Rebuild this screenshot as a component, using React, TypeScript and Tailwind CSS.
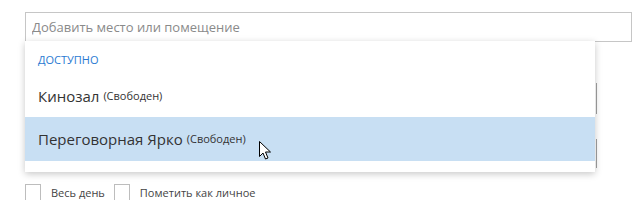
import { useState } from "react";

const font = { fontFamily: '"Open Sans", "Noto Sans", sans-serif' };

function Cursor() {
  return (
    <svg width="13" height="19" viewBox="0 0 13 19" className="absolute left-[259px] top-[141px]">
      <path
        d="M0.5 0.5 L0.5 15.5 L4 12 L6.5 18 L9 17 L6.5 11 L11.5 11 Z"
        fill="#fff"
        stroke="#000"
        strokeWidth="1"
        strokeLinejoin="round"
      />
    </svg>
  );
}

function Checkbox({ label }: { label: string }) {
  return (
    <label className="flex items-center gap-[10px]">
      <span className="block h-[17px] w-[16px] border border-[#bdbdbd] bg-white" />
      <span className="text-[11px] leading-[17px] text-[#444]">{label}</span>
    </label>
  );
}

export default function App() {
  const [query] = useState("");

  return (
    <div className="relative h-[200px] w-[639px] overflow-hidden bg-white" style={font}>
      <div className="pl-[25px] pt-[12px]">
        <input
          value={query}
          readOnly
          placeholder="Добавить место или помещение"
          className="block h-[30px] w-[607px] border border-[#c6c6c6] px-[6px] text-[13px] text-[#333] placeholder:text-[#8a8a8a] focus:outline-none"
        />
        <div className="h-[142px]" />
        <div className="flex items-center gap-[9px]">
          <Checkbox label="Весь день" />
          <Checkbox label="Пометить как личное" />
        </div>
      </div>

      {/* borders of the fields under the menu */}
      <div className="absolute left-[596px] top-[83px] h-[31px] w-px bg-[#a0a0a0]" />
      <div className="absolute left-[596px] top-[139px] h-[29px] w-px bg-[#a0a0a0]" />

      <div className="absolute left-[25px] top-[41px] w-[570px] bg-white pb-[11px] shadow-[0_2px_7px_rgba(0,0,0,0.22)]">
        <div className="px-[13px] pt-[12px] pb-[8px] text-[11px] leading-[14px] text-[#2a7ad2]">ДОСТУПНО</div>
        <div className="flex h-[42px] items-center px-[13px] text-[#333]">
          <span className="text-[15px]">Кинозал</span>
          <span className="ml-[4px] text-[11px]">(Свободен)</span>
        </div>
        <div className="flex h-[44px] items-center bg-[#c8dff3] px-[13px] text-[#333]">
          <span className="text-[15px]">Переговорная Ярко</span>
          <span className="ml-[4px] text-[11px]">(Свободен)</span>
        </div>
      </div>

      <Cursor />
    </div>
  );
}
